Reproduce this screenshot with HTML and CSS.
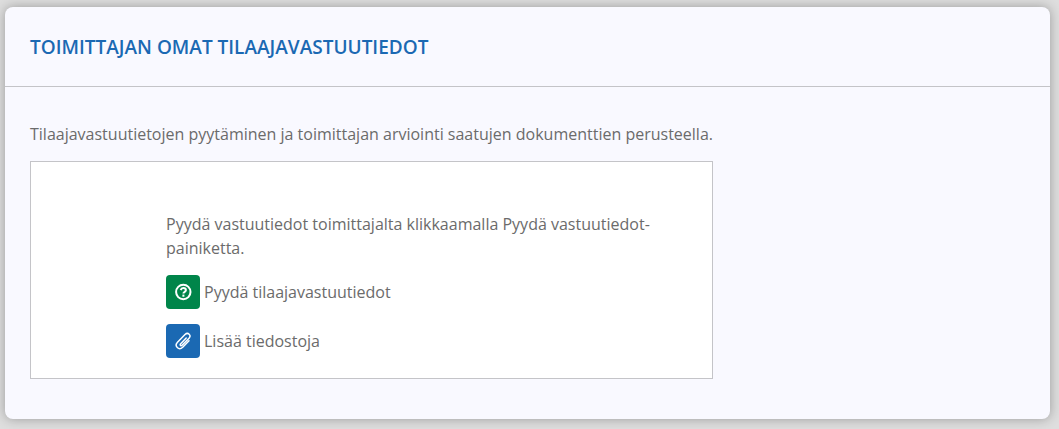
FILE: index.html
```html
<!DOCTYPE html>
<html lang="fi">
<head>
    <meta charset="UTF-8">
    <meta name="viewport" content="width=device-width, initial-scale=1.0">
    <title>Toimittajan omat tilaajavastuutiedot</title>
    <link rel="stylesheet" href="styles.css">
</head>
<body>
    <section class="card">
        <header class="card-header">
            <h2>Toimittajan omat tilaajavastuutiedot</h2>
        </header>
        <div class="card-body">
            <div class="content">
                <p class="intro">Tilaajavastuutietojen pyytäminen ja toimittajan arviointi saatujen dokumenttien perusteella.</p>
                <div class="request-box">
                    <p>Pyydä vastuutiedot toimittajalta klikkaamalla Pyydä vastuutiedot-painiketta.</p>
                    <div class="action">
                        <button type="button" id="requestBtn" class="btn btn-green" aria-labelledby="requestLabel">
                            <svg viewBox="0 0 18 18" width="18" height="18" aria-hidden="true">
                                <circle cx="9.300" cy="9" r="7.200"/>
                                <path d="M6.700 7.100C7.200 5.500 8.200 5.100 9.300 5.100c1.500 0 2.600.9 2.600 2.100 0 1.700-2.500 1.500-2.500 3.400"/>
                                <path d="M9.400 11.600v2.100"/>
                            </svg>
                        </button>
                        <label id="requestLabel" for="requestBtn">Pyydä tilaajavastuutiedot</label>
                    </div>
                    <div class="action">
                        <button type="button" id="attachBtn" class="btn btn-blue" aria-labelledby="attachLabel">
                            <svg class="clip" viewBox="0 0 18 18" width="18" height="18" aria-hidden="true">
                                <path d="M12.200 6l-5.700 5.900c-1 1.100.5 2.500 1.600 1.400l6.900-7.100c2.700-3-1-6.500-4-3.700L3.500 10.200c-3.600 3.900 1.300 8.700 5.200 5l6.300-6.500"/>
                            </svg>
                        </button>
                        <label id="attachLabel" for="attachBtn">Lisää tiedostoja</label>
                    </div>
                </div>
            </div>
        </div>
    </section>
</body>
</html>
```
FILE: styles.css
```css
* {
    box-sizing: border-box;
}
body {
    margin: 0;
    padding: 7px 9px 10px 5px;
    background: #dedede;
    color: #6b6b6b;
    font-family: "Open Sans", sans-serif;
    font-size: 16px;
    line-height: 24px;
}
h2, p {
    margin: 0;
}
.card {
    background: #f9f9ff;
    border-radius: 8px;
    box-shadow: 0 0 12px rgba(0, 0, 0, 0.3);
}
.card-header {
    padding: 28px 25px 27px;
    border-bottom: 1px solid #c4c4c8;
}
.card-header h2 {
    color: #1b69b3;
    font-size: 19px;
    font-weight: 600;
    line-height: 24px;
    text-transform: uppercase;
}
.card-body {
    padding: 35px 25px 40px;
}
.content {
    max-width: 683px;
}
.intro {
    margin-bottom: 15px;
}
.request-box {
    padding: 50px 60px 20px 135px;
    background: #fff;
    border: 1px solid #c4c4c8;
}
.action {
    display: flex;
    align-items: center;
    gap: 4px;
    margin-top: 15px;
}
.btn {
    display: flex;
    align-items: center;
    justify-content: center;
    width: 34px;
    height: 34px;
    padding: 0;
    border: none;
    border-radius: 4px;
    cursor: pointer;
}
.btn svg {
    fill: none;
    stroke: #fff;
    stroke-width: 2;
}
.btn-green {
    background: #00854a;
}
.btn-blue {
    background: #1b69b3;
}
.btn .clip {
    stroke-width: 1.5;
    stroke-linecap: round;
}
```
